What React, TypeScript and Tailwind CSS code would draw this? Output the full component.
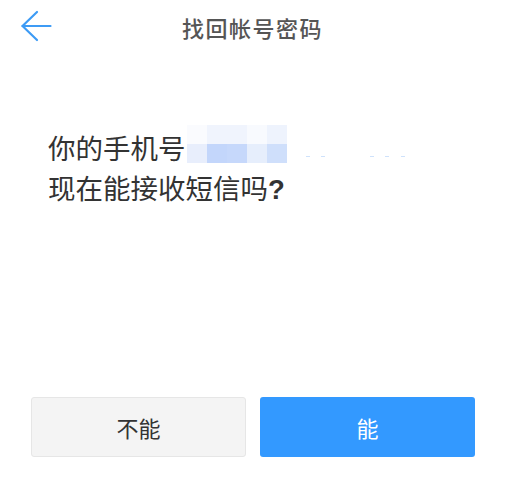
import React from "react";

const row1 = ["#fafbfe", "#f0f4fd", "#f0f4fd", "#f8fafe", "#eef3fd"];
const row2 = ["#e8eefc", "#c3d6fb", "#c6d8fb", "#e6eefc", "#cfdffb"];

export default function App() {
  return (
    <div
      className="w-[505px] h-[486px] bg-white text-[#333333]"
      style={{ fontFamily: '"Noto Sans CJK SC", "Noto Sans", sans-serif' }}
    >
      <div className="relative h-[54px] flex items-center justify-center">
        <svg
          className="absolute left-[20px] top-[10px]"
          width="34"
          height="32"
          viewBox="0 0 34 32"
          fill="none"
          stroke="#3d9bf5"
          strokeWidth="2.2"
          strokeLinecap="round"
          strokeLinejoin="round"
        >
          <path d="M2.5 16H30.5" />
          <path d="M17 2L2.5 16L17 30" />
        </svg>
        <span className="text-[22px] font-medium text-[#555555] tracking-[1.5px] leading-none">
          找回帐号密码
        </span>
      </div>

      <div className="mt-[73px] pl-[48px] text-[27.5px] leading-[40px]">
        <div className="flex items-start">
          <span>你的手机号</span>
          <div className="-mt-[2px] ml-[1.5px] grid grid-cols-5 w-[100px] h-[38px]">
            {row1.map((c, i) => (
              <div key={"a" + i} style={{ backgroundColor: c }} />
            ))}
            {row2.map((c, i) => (
              <div key={"b" + i} style={{ backgroundColor: c }} />
            ))}
          </div>
          <div className="ml-[19px] mt-[29px] flex items-center">
            <span className="w-[4px] h-[1px] bg-[#cfe2fb]" />
            <span className="ml-[11px] w-[4px] h-[1px] bg-[#cfe2fb]" />
            <span className="ml-[45px] w-[4px] h-[1px] bg-[#cfe2fb]" />
            <span className="ml-[11px] w-[4px] h-[1px] bg-[#cfe2fb]" />
            <span className="ml-[12px] w-[4px] h-[1px] bg-[#cfe2fb]" />
          </div>
        </div>
        <div>
          现在能接收短信吗<span className="font-bold" style={{ fontFamily: '"Liberation Sans", sans-serif' }}>?</span>
        </div>
      </div>

      <div className="mt-[187px] flex gap-[14px] pl-[31px] pr-[30px]">
        <button className="w-[215px] h-[60px] rounded-[3px] border border-[#e6e6e6] bg-[#f4f4f4] text-[22px] text-[#333333]">
          不能
        </button>
        <button className="w-[215px] h-[60px] rounded-[3px] bg-[#3399ff] text-[22px] text-white">
          能
        </button>
      </div>
    </div>
  );
}
